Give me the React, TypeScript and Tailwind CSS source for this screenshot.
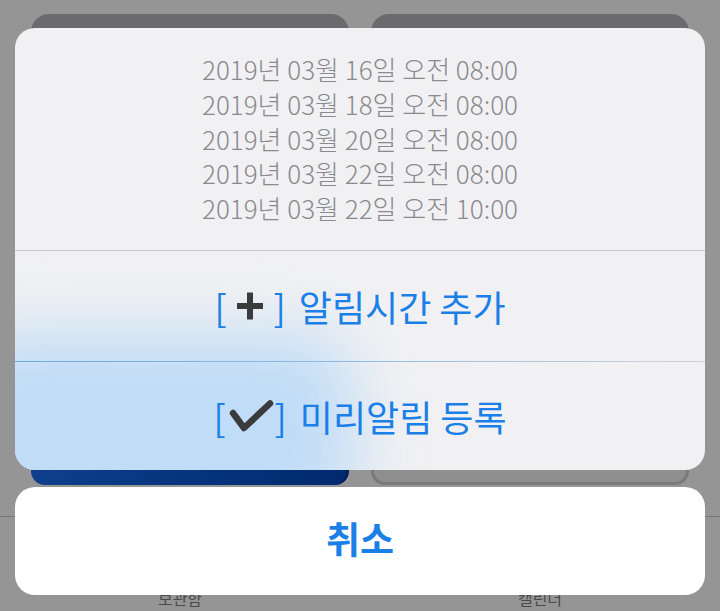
import React from "react";

const font = { fontFamily: '"Noto Sans CJK KR", "Noto Sans", sans-serif' };

const dates = [
  "2019년 03월 16일 오전 08:00",
  "2019년 03월 18일 오전 08:00",
  "2019년 03월 20일 오전 08:00",
  "2019년 03월 22일 오전 08:00",
  "2019년 03월 22일 오전 10:00",
];

function PlusIcon() {
  return (
    <svg width="26" height="28" viewBox="0 0 26 28" className="ml-[10px] mr-[11px]">
      <path d="M13 0.5 V27.5 M0 14 H26" stroke="#3b3b3d" strokeWidth="6" strokeLinecap="butt" />
    </svg>
  );
}

function CheckIcon() {
  return (
    <svg width="46" height="32" viewBox="0 0 46 32" className="ml-[2px] mr-[1px]">
      <path d="M5 13 L16 28 L42 3.5" stroke="#3b3b3d" strokeWidth="6.5" fill="none" strokeLinecap="round" strokeLinejoin="round" />
    </svg>
  );
}

export default function App() {
  return (
    <div className="relative w-[720px] h-[611px] overflow-hidden bg-[#959595]" style={font}>
      {/* background screen (dimmed) */}
      <div className="flex flex-col h-full">
        <div className="grid grid-cols-2 gap-[22px] px-[31px] pt-[14px]">
          <div className="h-[80px] rounded-[18px] bg-[#6b6b6d]" />
          <div className="h-[80px] rounded-[18px] bg-[#6b6b6d]" />
        </div>
        <div className="grid grid-cols-2 gap-[22px] px-[31px] mt-[331px]">
          <div className="h-[60px] rounded-[14px] bg-gradient-to-r from-[#0f3f8c] to-[#002a6e] border-r-[3px] border-[#001e55]" />
          <div className="h-[60px] rounded-[14px] bg-[#8f8f8f] border-[3px] border-[#7a7a7a]" />
        </div>
        <div className="mt-[31px] border-t border-[#777777] grid grid-cols-2 pt-[71px]">
          <div className="text-center text-[16px] leading-[20px] text-[#4a4a4a]">보관함</div>
          <div className="text-center text-[16px] leading-[20px] text-[#4a4a4a]">캘린더</div>
        </div>
      </div>

      {/* action sheet overlay */}
      <div className="absolute left-[15px] right-[15px] top-[28px] flex flex-col gap-[17px]">
        <div className="relative h-[442px] rounded-[20px] overflow-hidden bg-[#f1f1f3] flex flex-col">
          <div className="absolute left-[-70px] top-[305px] w-[410px] h-[200px] rounded-[60px] bg-[#c0dcf6] blur-[32px]" />
          <div className="relative h-[222px] flex flex-col items-center pt-[24px]">
            {dates.map((d) => (
              <div key={d} className="text-[26px] leading-[34.75px] font-light text-[#8a8a8e]">
                {d}
              </div>
            ))}
          </div>
          <div className="relative h-px bg-[#c6c6c8]" />
          <div className="relative h-[110px] flex items-center justify-center text-[#1a7fe6] text-[36px] leading-none">
            <span>[</span>
            <PlusIcon />
            <span>]</span>
            <span className="ml-[13px]">알림시간 추가</span>
          </div>
          <div className="relative h-px bg-gradient-to-r from-[#6aa8de] via-[#8fbde6] to-[#d0d0d4]" />
          <div className="relative flex-1 flex items-center justify-center text-[#1a7fe6] text-[36px] leading-none">
            <span>[</span>
            <CheckIcon />
            <span>]</span>
            <span className="ml-[13px]">미리알림 등록</span>
          </div>
        </div>
        <div className="h-[108px] rounded-[20px] bg-white flex items-center justify-center pb-[5px]">
          <span className="text-[37px] font-bold text-[#1a7fe6] leading-none">취소</span>
        </div>
      </div>
    </div>
  );
}
